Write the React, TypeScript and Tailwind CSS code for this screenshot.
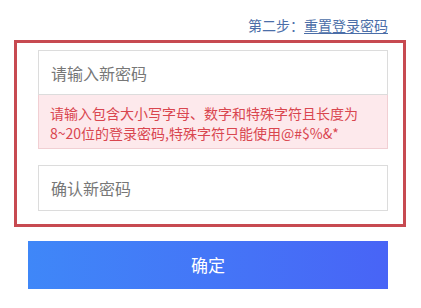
export default function App() {
  return (
    <div className="w-[421px] h-[308px] bg-white font-['Microsoft_YaHei','Noto_Sans_CJK_SC',sans-serif]">
      <div className="pt-[15px] pr-[33px] text-right text-[14px] leading-5 text-[#4b6ea8]">
        第二步：<span className="underline underline-offset-2">重置登录密码</span>
      </div>

      <div className="mt-[5px] ml-[14px] w-[392px] h-[187px] border-[3px] border-[#c74a51] pt-[7px] pl-[21px] pr-[15px]">
        <div className="h-[45px] border border-[#dcdcdc] flex items-center pl-[12px] text-[16px] text-[#777]">
          请输入新密码
        </div>
        <div className="h-[54px] border-x border-b border-[#f1cfd3] bg-[#fde9ec] pt-[8px] pl-[11px] text-[14px] leading-5 text-[#d9464f]">
          请输入包含大小写字母、数字和特殊字符且长度为
          <br />
          8~20位的登录密码,特殊字符只能使用@#$%&amp;*
        </div>
        <div className="mt-[16px] h-[46px] border border-[#dcdcdc] flex items-center pl-[12px] text-[16px] text-[#777]">
          确认新密码
        </div>
      </div>

      <button className="mt-[14px] ml-[28px] w-[360px] h-[48px] bg-gradient-to-r from-[#3f87f8] to-[#4864f6] text-white text-[17px] flex items-center justify-center">
        确定
      </button>
    </div>
  )
}
